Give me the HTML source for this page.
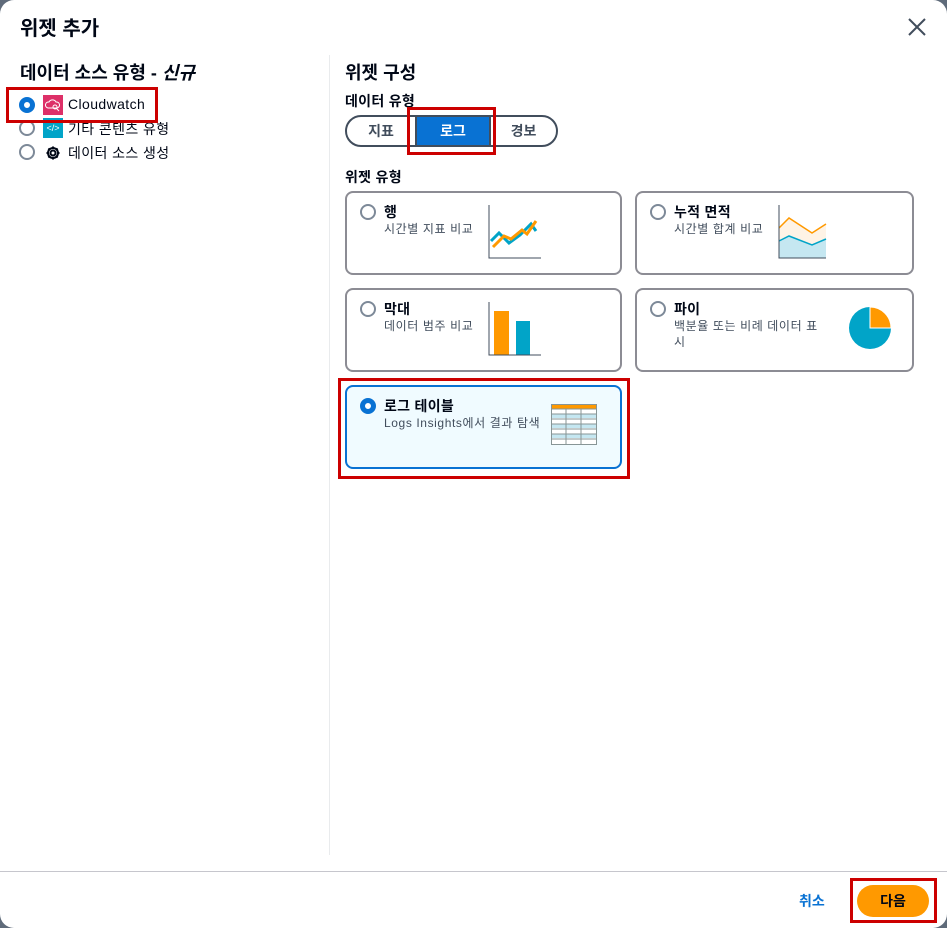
<!DOCTYPE html>
<html><head><meta charset="utf-8"><style>
*{box-sizing:border-box;margin:0;padding:0}
body{width:947px;height:928px;background:#5f6b7a;font-family:"Liberation Sans","Noto Sans CJK KR",sans-serif;color:#000716;position:relative;overflow:hidden}
.dlg{position:absolute;left:0;top:0;width:947px;height:928px;background:#fff;border-radius:14px}
.a{position:absolute}
.h{font-weight:bold;font-size:18px;color:#000716}
.rad{position:absolute;width:16px;height:16px;border:2px solid #7d8998;border-radius:50%;background:#fff}
.rad.on{border:5px solid #0972d3}
.t{font-size:14px;color:#000716;letter-spacing:.4px}
.card{position:absolute;width:277px;height:84px;border:2px solid #8c8c94;border-radius:8px;background:#fff}
.card .rad{left:13px;top:11px}
.card .n{position:absolute;left:37px;top:9px;font-size:14px;font-weight:bold;letter-spacing:.3px}
.card .d{position:absolute;left:37px;top:28px;font-size:12px;color:#414d5c;line-height:16px;letter-spacing:.6px}
.red{position:absolute;border:3px solid #c00;}
</style></head><body>
<div class="dlg">
<div class="a" style="left:20px;top:12px;font-size:20px;font-weight:bold">위젯 추가</div>
<svg class="a" style="left:907px;top:17px" width="20" height="20"><path d="M2 2L18 18M18 2L2 18" stroke="#414d5c" stroke-width="2"/></svg>

<div class="a h" style="left:20px;top:59px">데이터 소스 유형 - <i>신규</i></div>
<div class="rad on" style="left:19px;top:97px"></div>
<div class="a" style="left:43px;top:95px;width:20px;height:20px;background:#dd3068"><svg width="20" height="20"><path d="M5 13a3 3 0 0 1 1-6a4 4 0 0 1 7 0a3 3 0 0 1 1 6z" fill="none" stroke="#fff" stroke-width="1"/><circle cx="12" cy="12" r="2" fill="none" stroke="#fff"/><path d="M13.5 13.5L16 16" stroke="#fff"/></svg></div>
<div class="a t" style="left:68px;top:96px">Cloudwatch</div>
<div class="rad" style="left:19px;top:120px"></div>
<div class="a" style="left:43px;top:118px;width:20px;height:20px;background:#01a4c8;color:#fff;font-size:9px;text-align:center;line-height:20px">&lt;/&gt;</div>
<div class="a t" style="left:68px;top:119px">기타 콘텐츠 유형</div>
<div class="rad" style="left:19px;top:144px"></div>
<svg class="a" style="left:44px;top:144px" width="18" height="18" viewBox="0 0 18 18"><g stroke="#000716" stroke-width="2" fill="none"><circle cx="9" cy="9" r="2.5"/><path d="M9 2.5V4.5M9 13.5V15.5M2.5 9H4.5M13.5 9H15.5M4.4 4.4L5.8 5.8M12.2 12.2L13.6 13.6M4.4 13.6L5.8 12.2M12.2 5.8L13.6 4.4"/><circle cx="9" cy="9" r="5"/></g></svg>
<div class="a t" style="left:68px;top:143px">데이터 소스 생성</div>
<div class="red" style="left:6px;top:87px;width:152px;height:36px"></div>

<div class="a" style="left:329px;top:55px;width:1px;height:800px;background:#e9ebed"></div>

<div class="a h" style="left:345px;top:59px">위젯 구성</div>
<div class="a" style="left:345px;top:91px;font-size:14px;font-weight:bold;letter-spacing:.3px">데이터 유형</div>
<div class="a" style="left:345px;top:115px;width:213px;height:32px;border:2px solid #414d5c;border-radius:16px;overflow:hidden">
<div class="a" style="left:0;top:0;width:68px;height:28px;text-align:center;line-height:28px;font-size:14px;font-weight:bold;color:#414d5c">지표</div>
<div class="a" style="left:68px;top:0;width:76px;height:28px;background:#0972d3;border:2px solid #414d5c;border-top:0;border-bottom:0;text-align:center;line-height:28px;font-size:14px;font-weight:bold;color:#fff">로그</div>
<div class="a" style="left:144px;top:0;width:65px;height:28px;text-align:center;line-height:28px;font-size:14px;font-weight:bold;color:#414d5c">경보</div>
</div>
<div class="red" style="left:407px;top:107px;width:89px;height:48px"></div>

<div class="a" style="left:345px;top:167px;font-size:14px;font-weight:bold;letter-spacing:.3px">위젯 유형</div>

<div class="card" style="left:345px;top:191px"><div class="rad"></div><div class="n">행</div><div class="d">시간별 지표 비교</div>
<svg class="a" style="left:141px;top:12px" width="56" height="56"><path d="M1 0V53H53" fill="none" stroke="#414d5c"/><path d="M3 36L11 28L21 38L32 30L43 19L48 26" fill="none" stroke="#01a4c8" stroke-width="3"/><path d="M5 42L16 31L23 34L34 25L39 29L48 16" fill="none" stroke="#f90" stroke-width="3"/></svg></div>
<div class="card" style="left:635px;top:191px;width:279px"><div class="rad"></div><div class="n">누적 면적</div><div class="d">시간별 합계 비교</div>
<svg class="a" style="left:141px;top:12px" width="56" height="56"><path d="M1 23L11 13L34 28L48 19V53H1z" fill="#fef3e6"/><path d="M1 36L11 31L34 40L48 34V53H1z" fill="#c5e7f1"/><path d="M1 23L11 13L34 28L48 19" fill="none" stroke="#f90" stroke-width="1.5"/><path d="M1 36L11 31L34 40L48 34" fill="none" stroke="#01a4c8" stroke-width="1.5"/><path d="M1 0V53H48" fill="none" stroke="#414d5c"/></svg></div>
<div class="card" style="left:345px;top:288px"><div class="rad"></div><div class="n">막대</div><div class="d">데이터 범주 비교</div>
<svg class="a" style="left:141px;top:12px" width="56" height="56"><rect x="6" y="9" width="15" height="44" fill="#f90"/><rect x="28" y="19" width="14" height="34" fill="#01a4c8"/><path d="M1 0V53H53" fill="none" stroke="#414d5c"/></svg></div>
<div class="card" style="left:635px;top:288px;width:279px"><div class="rad"></div><div class="n">파이</div><div class="d" style="width:150px">백분율 또는 비례 데이터 표시</div>
<svg class="a" style="left:210px;top:15px" width="46" height="46"><circle cx="23" cy="23" r="21" fill="#01a4c8"/><path d="M23 23V2A21 21 0 0 1 44 23z" fill="#f90" stroke="#fff" stroke-width="1"/></svg></div>
<div class="card" style="left:345px;top:385px;border-color:#0972d3;background:#f0fbff"><div class="rad on"></div><div class="n">로그 테이블</div><div class="d">Logs Insights에서 결과 탐색</div>
<svg class="a" style="left:204px;top:17px" width="48" height="44"><rect x="0.5" y="0.5" width="45" height="40" fill="#fff" stroke="#879596"/><rect x="1" y="1" width="44" height="4" fill="#f90"/><g fill="#c5e7f1"><rect x="1" y="10" width="44" height="4"/><rect x="1" y="20" width="44" height="4"/><rect x="1" y="30" width="44" height="4"/></g><g stroke="#879596"><path d="M1 5H45M1 10H45M1 15H45M1 20H45M1 25H45M1 30H45M1 35H45M15 5V40M30 5V40"/></g></svg></div>
<div class="red" style="left:338px;top:378px;width:292px;height:101px"></div>

<div class="a" style="left:0;top:871px;width:947px;height:1px;background:#c6c6cd"></div>
<div class="a" style="left:799px;top:891px;font-size:14px;font-weight:bold;color:#0972d3">취소</div>
<div class="a" style="left:857px;top:885px;width:72px;height:32px;background:#ff9900;border-radius:16px;text-align:center;line-height:32px;font-size:14px;font-weight:bold">다음</div>
<div class="red" style="left:850px;top:878px;width:87px;height:45px"></div>
</div>
</body></html>
